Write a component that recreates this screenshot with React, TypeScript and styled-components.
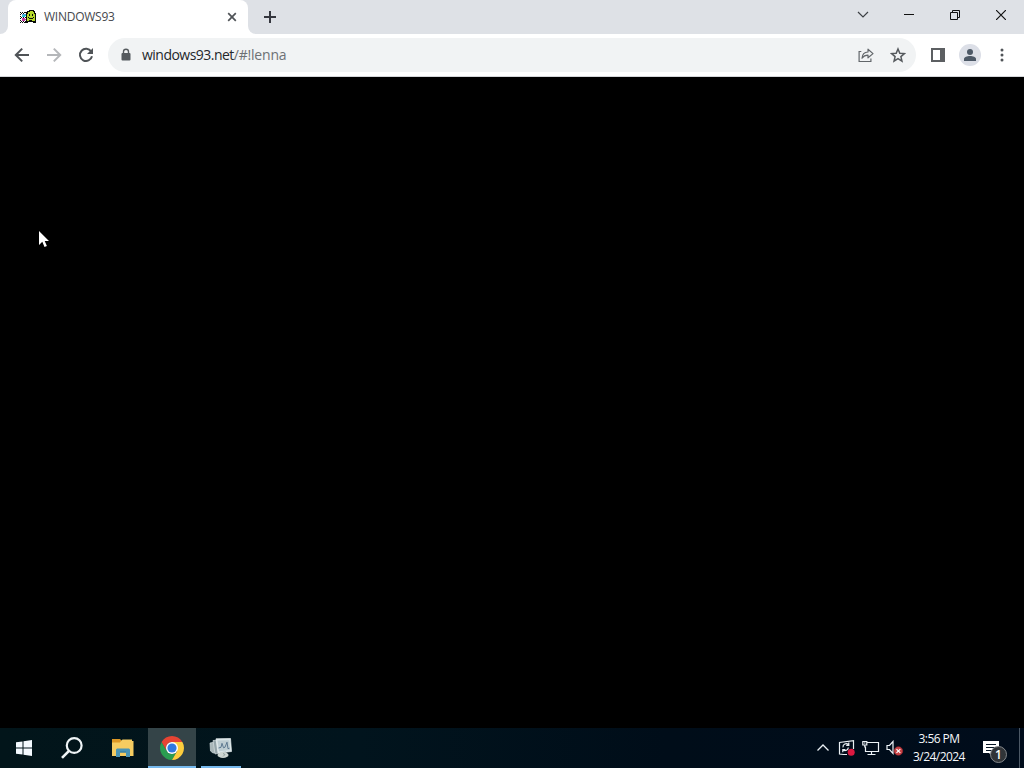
import React from 'react';
import styled, { createGlobalStyle } from 'styled-components';

const GlobalStyle = createGlobalStyle`
  * { box-sizing: border-box; }
  body { margin: 0; overflow: hidden; background: #000; font-family: "Open Sans", "Noto Sans", sans-serif; }
  svg { display: block; flex: none; }
`;

const Screen = styled.div`
  position: relative;
  display: flex;
  flex-direction: column;
  width: 1024px;
  height: 768px;
  background: #000;
`;

const TabStrip = styled.header`
  display: flex;
  height: 34px;
  padding-left: 8px;
  background: #dee1e6;
  background-image: linear-gradient(#fff, #fff);
  background-size: 8px 8px;
  background-position: 0 26px;
  background-repeat: no-repeat;
`;

const Tab = styled.div`
  position: relative;
  display: flex;
  align-items: center;
  width: 240px;
  padding: 0 8px 0 12px;
  background: #fff;
  border-radius: 8px 8px 0 0;
  &::before, &::after {
    content: "";
    position: absolute;
    bottom: 0;
    width: 8px;
    height: 8px;
    background: #dee1e6;
  }
  &::before { left: -8px; border-bottom-right-radius: 8px; }
  &::after { left: 100%; border-bottom-left-radius: 8px; }
`;

const TabFoot = styled.span`
  position: absolute;
  left: 100%;
  bottom: 0;
  width: 8px;
  height: 8px;
  background: #fff;
`;

const TabTitle = styled.span`
  flex: 1;
  margin-left: 8px;
  color: #45484d;
  font-size: 12px;
  line-height: 16px;
  letter-spacing: -0.25px;
  white-space: nowrap;
`;

const Slot = styled.button<{ $w: number }>`
  display: flex;
  flex: none;
  align-items: center;
  justify-content: center;
  width: ${(p) => p.$w}px;
  height: 100%;
  padding: 0;
  border: 0;
  background: none;
`;

const NewTab = styled(Slot)`
  margin-left: 8px;
`;

const WindowControls = styled.div`
  display: flex;
  height: 29px;
  margin-left: auto;
`;

const Toolbar = styled.nav`
  display: flex;
  align-items: center;
  height: 43px;
  padding: 0 6px;
  background: #fff;
  border-bottom: 1px solid #d5d7da;
`;

const Omnibox = styled.div`
  display: flex;
  align-items: center;
  width: 808px;
  height: 34px;
  margin: 0 6px;
  padding: 0 2px 0 12px;
  border-radius: 17px;
  background: #f1f3f4;
`;

const Address = styled.span`
  flex: 1;
  margin-left: 10px;
  color: #24272b;
  font-size: 14px;
  line-height: 20px;
  letter-spacing: -0.52px;
  white-space: nowrap;
`;

const Path = styled.span`
  color: #6d7175;
  letter-spacing: -0.22px;
`;

const Avatar = styled.span`
  display: flex;
  align-items: center;
  justify-content: center;
  width: 22px;
  height: 22px;
  border-radius: 50%;
  background: #dcdfe7;
`;

const Page = styled.main`
  flex: 1;
  background: #000;
`;

const Taskbar = styled.footer`
  display: flex;
  height: 40px;
  background: linear-gradient(90deg, #02151a 0%, #01141d 35%, #000d19 65%, #000c1b 100%);
`;

const TaskButton = styled(Slot)<{ $active?: boolean; $running?: boolean }>`
  position: relative;
  background: ${(p) => (p.$active ? '#344448' : 'none')};
  &::after {
    content: "";
    position: absolute;
    display: ${(p) => (p.$running ? 'block' : 'none')};
    left: ${(p) => (p.$active ? 0 : 4)}px;
    right: ${(p) => (p.$active ? 0 : 4)}px;
    bottom: 0;
    height: 2px;
    background: #76b9ed;
  }
`;

const TaskGroup = styled.div`
  display: flex;
  gap: 1px;
  margin-left: 2px;
`;

const Tray = styled.div`
  display: flex;
  align-items: center;
  margin-left: auto;
`;

const Clock = styled.div`
  width: 64px;
  color: #f6f8fa;
  text-align: center;
  font-size: 12px;
  line-height: 18px;
  letter-spacing: -0.55px;
  white-space: nowrap;
`;

const Notifications = styled.div`
  position: relative;
  display: flex;
  align-items: center;
  justify-content: center;
  width: 40px;
  height: 100%;
`;

const Badge = styled.span`
  position: absolute;
  left: 19px;
  top: 18px;
  width: 17px;
  height: 17px;
  border: 1px solid #83878b;
  border-radius: 50%;
  background: #303438;
  color: #fff;
  font-size: 12px;
  font-weight: 600;
  line-height: 15px;
  text-align: center;
`;

const ShowDesktop = styled.div`
  width: 5px;
  height: 100%;
  margin-left: 8px;
  border-left: 1px solid #4c5865;
`;

const Pointer = styled.div`
  position: absolute;
  left: 38px;
  top: 230px;
`;

const faviconRows = [
  '.........kkkkk..',
  '.......kkkyyykk.',
  'k.k.kkkkyyyyyyk.',
  '.k.k..kkyyyyyykk',
  'k.bbbbkyykyykyyk',
  '..bccckyykyykyyk',
  'k.ccc.kyyyyyyyyk',
  '.k.k.kkykyyyykyk',
  'k.mmm.kyykkkkyyk',
  '..mmmmkyyyyyyyyk',
  'k.mmm.kyykkkyyyk',
  '.k.k.kkkkkkkkkkk',
  'k.k.kkkk.....kkk',
];
const faviconColors: Record<string, string> = { k: '#080b08', y: '#b5d82b', b: '#5ba8dc', c: '#25c4d9', m: '#c43ba4' };

const Favicon = () => (
  <svg width="16" height="14" viewBox="0 0 16 14" shapeRendering="crispEdges">
    {faviconRows.flatMap((row, y) =>
      row.split('').map((c, x) =>
        c === '.' ? null : <rect key={`${x}-${y}`} x={x} y={y} width="1" height="1" fill={faviconColors[c]} />,
      ),
    )}
  </svg>
);

const Stroke = ({ d, size = 16, color = '#4f5357', width = 2 }: { d: string; size?: number; color?: string; width?: number }) => (
  <svg width={size} height={size} viewBox={`0 0 ${size} ${size}`} fill="none" stroke={color} strokeWidth={width}>
    <path d={d} />
  </svg>
);

const ARROW_LEFT = 'M15 8H2.2M8.2 1.6 1.8 8l6.4 6.4';
const ARROW_RIGHT = 'M1 8h12.8M7.8 1.6 14.2 8l-6.4 6.4';

const Lock = () => (
  <svg width="12" height="14" viewBox="0 0 12 14">
    <path d="M3.5 6V3.8a2.5 2.5 0 0 1 5 0V6" fill="none" stroke="#555a5e" strokeWidth="1.4" />
    <rect x="1.5" y="5" width="9" height="7.5" rx="1" fill="#555a5e" />
  </svg>
);

const Reload = () => (
  <svg width="16" height="16" viewBox="0 0 16 16">
    <path d="M13.2 4.6A6.1 6.1 0 1 0 14 9.3" fill="none" stroke="#4f5357" strokeWidth="2" />
    <path d="M15 1v6H9z" fill="#4f5357" />
  </svg>
);

const Share = () => (
  <svg width="16" height="16" viewBox="0 0 16 16" fill="none" stroke="#62666a" strokeWidth="1.2">
    <path d="M3.3 4.5H1.1v10h11.800v-3" />
    <path d="M4 11.200c.3-4 2.300-6 6-6.200V2.200l5 4.400-5 4.200V8.100C7.300 8.100 5.500 9 4 11.200z" strokeLinejoin="round" />
  </svg>
);

const Star = () => (
  <svg width="16" height="16" viewBox="0 0 16 16" fill="none" stroke="#55595d" strokeWidth="1.5">
    <path d="m8 2 1.800 4.200 4.600.4-3.500 3 1.050 4.500L8 11.700l-3.950 2.400 1.050-4.500-3.500-3 4.600-.4z" />
  </svg>
);

const SidePanel = () => (
  <svg width="14" height="14" viewBox="0 0 14 14">
    <path fillRule="evenodd" d="M0 0h14v14H0zM2 2v10h7V2z" fill="#5c5f62" />
  </svg>
);

const Person = () => (
  <svg width="14" height="14" viewBox="0 0 14 14" fill="#4c5866">
    <circle cx="7" cy="4" r="3" />
    <path d="M1 13V11c0-2 3-3 6-3s6 1 6 3v2z" />
  </svg>
);

const Dots = () => (
  <svg width="4" height="14" viewBox="0 0 4 14" fill="#505458">
    <circle cx="2" cy="2" r="1.500" /><circle cx="2" cy="7" r="1.500" /><circle cx="2" cy="12" r="1.500" />
  </svg>
);

const Restore = () => (
  <svg width="10" height="10" viewBox="0 0 10 10" fill="none" stroke="#111">
    <path d="M.5 2.500h7v7h-7zM2.500 2.500v-2h7v7h-2" />
  </svg>
);

const WindowsLogo = () => (
  <svg width="16" height="16" viewBox="0 0 16 16" fill="#f4faff">
    <path d="M0 2.300 6.500 1.400v6.100H0zM7.500 1.200 16 0v7.500H7.500zM0 8.500h6.500v6.100L0 13.700zM7.500 8.500H16V16l-8.500-1.200z" />
  </svg>
);

const Search = () => (
  <svg width="22" height="22" viewBox="0 0 22 22" fill="none" stroke="#eff4f6" strokeWidth="2.200">
    <circle cx="13.200" cy="8.500" r="7.400" /><path d="M8 13.800 1 20.900" strokeWidth="2.600" />
  </svg>
);

const Explorer = () => (
  <svg width="22" height="18" viewBox="0 0 22 18">
    <path d="M0 0h8l2 2H0z" fill="#dc9725" />
    <path d="M0 2h9l1.500-1.500H20V2h1.500v15H0z" fill="#f5cc61" />
    <path d="M0 2h9l-1 1.500H0z" fill="#dc9725" />
    <path d="M4 18v-7.500L5 9.500h12l1 1V18h-4v-4.500H8V18z" fill="#4a94b5" />
    <path d="M8 12.500h6v1H8z" fill="#2f789d" />
  </svg>
);

const Chrome = () => (
  <svg width="24" height="24" viewBox="0 0 24 24">
    <path d="m1.610 6 5.200 9A6 6 0 0 0 17.200 15L12 24A12 12 0 0 1 1.610 6z" fill="#2a9d50" />
    <path d="M12 6h10.390A12 12 0 0 1 12 24l5.200-9z" fill="#fdcd3d" />
    <path d="M12 6h10.390A12 12 0 0 0 1.610 6l5.200 9A6 6 0 0 1 12 6z" fill="#e64433" />
    <circle cx="12" cy="12" r="6" fill="#fff" />
    <circle cx="12" cy="12" r="4.600" fill="#3079df" />
  </svg>
);

const Monitor = () => (
  <svg width="24" height="24" viewBox="0 0 24 24">
    <path d="m1 7 5-1 2 10.500-4 .5-2.500-2z" fill="#a9b7b9" stroke="#cfdadb" strokeWidth=".7" />
    <path d="m4 4.500 6-.5 1 13-5 1z" fill="#95a5a9" stroke="#d5dedf" strokeWidth=".7" />
    <path d="m7 2.800 14.500-.3 1 13-13.500 1.500z" fill="#d9e5e7" stroke="#eef4f5" strokeWidth=".7" />
    <path d="m8.500 4.500 11.800-.3.800 9.800-11 1.300z" fill="#becdd2" />
    <path d="m9.500 12 2.500-.7 1-4 1.500 4.500 1.500-.6 2-5 1 6.500 1.500-.5" fill="none" stroke="#54718a" strokeWidth=".9" />
    <path d="m13 16 4-.5 1 3h-4z" fill="#a7b5b8" />
    <ellipse cx="14" cy="19" rx="5.500" ry="3" fill="#ced6d2" />
    <path d="m14 17.500 2 1-2 2" fill="none" stroke="#899897" strokeWidth=".9" />
  </svg>
);

const SyncTray = () => (
  <svg width="18" height="18" viewBox="0 0 18 18" fill="none" stroke="#eaf0f4" strokeWidth="1.200">
    <path d="M9 15.500H5.500l-4-.5V3.500L15.500 1.700V10" />
    <path d="M5 8.300A3.200 3.200 0 0 1 10.500 5.700M10.800 3.500v2.800H8.200M10.300 8.500A3.200 3.200 0 0 1 5.200 11M4.800 13.200v-2.700h2.600" />
    <circle cx="13.200" cy="13.200" r="3.500" fill="#dc1940" stroke="none" />
  </svg>
);

const NetworkTray = () => (
  <svg width="18" height="16" viewBox="0 0 18 16" fill="none" stroke="#edf3f7" strokeWidth="1.200">
    <path d="M5 2.500h11.500v9h-13v-5M9.500 11.500v3M5.500 14.500h8" />
    <path d="M.8 1.500h4v3.500h-4zM2.800 5v2.500" /><path d="M2 3h1.500" />
  </svg>
);

const VolumeTray = () => (
  <svg width="18" height="16" viewBox="0 0 18 16" fill="none" stroke="#edf3f7" strokeWidth="1.200">
    <path d="M1 5.500h2.500l3.500-4v12l-3.500-4H1z" />
    <circle cx="12.400" cy="11" r="4.300" fill="#c74345" stroke="#ad2631" strokeWidth=".5" />
    <path d="m10.500 9.100 3.800 3.800M14.300 9.100l-3.800 3.800" stroke="#fff" />
  </svg>
);

const Message = () => (
  <svg width="16" height="15" viewBox="0 0 16 15">
    <path d="M0 0h16v12H9v3l-3-3H0z" fill="#fff" />
    <path d="M3 3.500h10M3 6.500h10M3 9.500h7" stroke="#071727" />
  </svg>
);

const Cursor = () => (
  <svg width="13" height="20" viewBox="0 0 13 20">
    <path d="M1 1v14l3.300-3.200L6.500 17l2.400-1-2.200-5H11z" fill="#fff" />
  </svg>
);

export default function App() {
  return (
    <Screen>
      <GlobalStyle />
      <TabStrip>
        <Tab>
          <TabFoot />
          <Favicon />
          <TabTitle>WINDOWS93</TabTitle>
          <Slot $w={16} aria-label="Close tab"><Stroke size={10} d="m1.200 1.200 7.600 7.600M8.800 1.200 1.200 8.800" width={1.700} /></Slot>
        </Tab>
        <NewTab $w={28} aria-label="New tab"><Stroke size={12} d="M6 0v12M0 6h12" color="#35373f" /></NewTab>
        <WindowControls>
          <Slot $w={46} aria-label="Search tabs"><Stroke size={12} d="m1 3 5 5 5-5" width={1.200} color="#3c4045" /></Slot>
          <Slot $w={46} aria-label="Minimize"><Stroke size={10} d="M0 4.500h10" width={1} color="#111" /></Slot>
          <Slot $w={46} aria-label="Restore"><Restore /></Slot>
          <Slot $w={46} aria-label="Close"><Stroke size={10} d="m0 0 10 10M10 0 0 10" width={1.200} color="#111" /></Slot>
        </WindowControls>
      </TabStrip>
      <Toolbar>
        <Slot $w={32} aria-label="Back"><Stroke d={ARROW_LEFT} /></Slot>
        <Slot $w={32} aria-label="Forward"><Stroke d={ARROW_RIGHT} color="#b5b7ba" /></Slot>
        <Slot $w={32} aria-label="Reload"><Reload /></Slot>
        <Omnibox>
          <Lock />
          <Address>windows93.net<Path>/#!lenna</Path></Address>
          <Slot $w={32} aria-label="Share"><Share /></Slot>
          <Slot $w={32} aria-label="Bookmark"><Star /></Slot>
        </Omnibox>
        <Slot $w={32} aria-label="Side panel"><SidePanel /></Slot>
        <Slot $w={32} aria-label="Profile"><Avatar><Person /></Avatar></Slot>
        <Slot $w={32} aria-label="Menu"><Dots /></Slot>
      </Toolbar>
      <Page />
      <Taskbar>
        <TaskButton $w={48} aria-label="Start"><WindowsLogo /></TaskButton>
        <TaskButton $w={48} aria-label="Search"><Search /></TaskButton>
        <TaskGroup>
          <TaskButton $w={49} aria-label="File Explorer"><Explorer /></TaskButton>
          <TaskButton $w={48} $active $running aria-label="Chrome"><Chrome /></TaskButton>
          <TaskButton $w={48} $running aria-label="Task monitor"><Monitor /></TaskButton>
        </TaskGroup>
        <Tray>
          <Slot $w={24} aria-label="Hidden icons"><Stroke size={12} d="m.5 8.500 5.500-5.500 5.500 5.500" width={1.300} color="#eaf0f4" /></Slot>
          <Slot $w={24} aria-label="Updates"><SyncTray /></Slot>
          <Slot $w={24} aria-label="Network"><NetworkTray /></Slot>
          <Slot $w={24} aria-label="Volume"><VolumeTray /></Slot>
          <Clock><div>3:56 PM</div><div>3/24/2024</div></Clock>
          <Notifications><Message /><Badge>1</Badge></Notifications>
          <ShowDesktop />
        </Tray>
      </Taskbar>
      <Pointer><Cursor /></Pointer>
    </Screen>
  );
}
